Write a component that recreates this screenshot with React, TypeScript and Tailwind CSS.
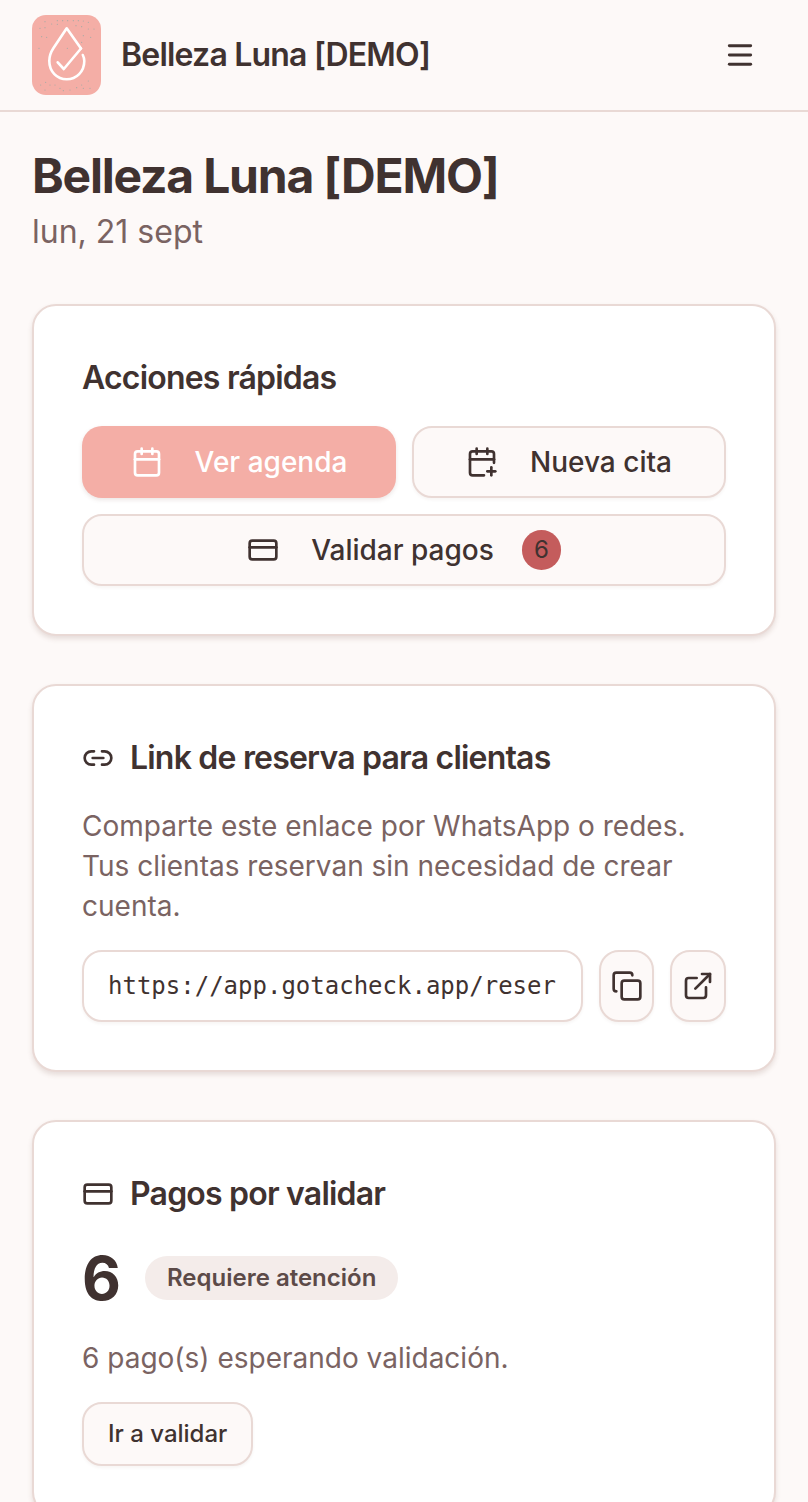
import { Calendar, CalendarPlus, CreditCard, Link2, Copy, ExternalLink, Menu } from "lucide-react";

function Logo() {
  const dots = [
    [75,50],[95,57],[112,47],[128,47],[143,47],[160,47],[175,47],[190,48],[205,52],[60,70],[75,68],[222,72],[205,72],[168,62],[185,65],[65,95],[80,97],[212,97],[190,92],[57,130],[185,112],[142,130],[112,58],
    [62,240],[77,232],[90,240],[105,240],[75,255],[120,250],[130,257],[150,255],[170,248],[185,240],[205,228],[190,250],[210,250],
  ];
  return (
    <div className="w-[69px] h-[80px] rounded-[14px] bg-[#f4aea6] shrink-0 overflow-hidden">
      <svg width="69" height="80" viewBox="0 0 69 80" fill="none">
        {dots.map(([x, y], i) => (
          <circle key={i} cx={x / 3 - 12} cy={y / 3 - 10} r="0.6" fill="#a5aaa5" />
        ))}
        <path
          d="M49 33.5 L34.7 13.3 L21.5 33 C18.5 37.5 17.3 41.5 17.3 46 C17.3 56.5 25 64.2 34.7 64.2 C44.5 64.2 52.3 56.5 52.3 46 C52.3 44 51.8 42 50.8 40"
          stroke="#fff"
          strokeWidth="2.6"
          strokeLinecap="round"
          strokeLinejoin="round"
        />
        <path d="M25.7 47.3 L31.8 54 L49 33.5" stroke="#fff" strokeWidth="2.6" strokeLinecap="round" strokeLinejoin="round" />
      </svg>
    </div>
  );
}

const ghost =
  "flex items-center justify-center border-2 border-[#e9d9d5] bg-[#fdf9f8] text-[#403230] shadow-[0_2px_3px_rgba(120,80,70,0.06)]";
const card =
  "bg-white border-2 border-[#e9d9d5] rounded-[24px] p-[48px] shadow-[0_3px_5px_rgba(120,80,70,0.16)]";

export default function App() {
  return (
    <div className="h-[1502px] overflow-hidden bg-[#fdf9f8] text-[#403230] font-['Inter',sans-serif]">
      <header className="h-[112px] border-b-2 border-[#e9d9d5] pl-[32px] pr-[52px] flex items-center justify-between">
        <div className="flex items-center gap-[20px]">
          <Logo />
          <span className="text-[32px] leading-[40px] font-semibold tracking-[-0.8px]">Belleza Luna [DEMO]</span>
        </div>
        <Menu size={32} strokeWidth={2.2} />
      </header>
      <main className="px-[32px] pt-[36px] flex flex-col">
        <h1 className="text-[48px] leading-[56px] font-bold tracking-[-1.2px]">Belleza Luna [DEMO]</h1>
        <p className="text-[32px] leading-[40px] text-[#7a6362] mt-[8px]">lun, 21 sept</p>

        <section className={`${card} mt-[52px]`}>
          <h2 className="text-[32px] leading-[48px] font-semibold tracking-[-0.8px]">Acciones rápidas</h2>
          <div className="grid grid-cols-2 gap-[16px] mt-[24px]">
            <button className="h-[72px] rounded-[20px] bg-[#f4aea6] text-white flex items-center justify-center gap-[32px] text-[28px] font-medium shadow-[0_2px_4px_rgba(120,80,70,0.14)]">
              <Calendar size={32} strokeWidth={2} />
              Ver agenda
            </button>
            <button className={`${ghost} h-[72px] rounded-[20px] gap-[32px] text-[28px] font-medium`}>
              <CalendarPlus size={32} strokeWidth={2} />
              Nueva cita
            </button>
            <button className={`${ghost} col-span-2 h-[72px] rounded-[20px] text-[28px] font-medium`}>
              <CreditCard size={32} strokeWidth={2} />
              <span className="ml-[32px]">Validar pagos</span>
              <span className="ml-[28px] w-[39px] h-[40px] rounded-full bg-[#c45c5c] flex items-center justify-center text-[24px] font-normal">6</span>
            </button>
          </div>
        </section>

        <section className={`${card} mt-[48px]`}>
          <div className="flex items-center gap-[16px]">
            <Link2 size={32} strokeWidth={2} />
            <h2 className="text-[32px] leading-[48px] font-semibold tracking-[-0.8px]">Link de reserva para clientas</h2>
          </div>
          <p className="mt-[24px] text-[28px] leading-[40px] text-[#7a6362]">
            Comparte este enlace por WhatsApp o redes. Tus clientas reservan sin necesidad de crear cuenta.
          </p>
          <div className="flex gap-[16px] mt-[24px]">
            <div className="flex-1 min-w-0 h-[72px] rounded-[20px] border-2 border-[#e9d9d5] bg-white px-[24px] flex items-center overflow-hidden font-['DejaVu_Sans_Mono',monospace] text-[24px] whitespace-nowrap shadow-[0_2px_3px_rgba(120,80,70,0.06)]">
              https://app.gotacheck.app/reser
            </div>
            <button className={`${ghost} w-[55px] h-[72px] rounded-[20px] shrink-0`}>
              <Copy size={32} strokeWidth={2} />
            </button>
            <button className={`${ghost} w-[56px] h-[72px] rounded-[20px] shrink-0`}>
              <ExternalLink size={32} strokeWidth={2} />
            </button>
          </div>
        </section>

        <section className={`${card} mt-[48px]`}>
          <div className="flex items-center gap-[16px]">
            <CreditCard size={32} strokeWidth={2} />
            <h2 className="text-[32px] leading-[48px] font-semibold tracking-[-0.8px]">Pagos por validar</h2>
          </div>
          <div className="flex items-center gap-[24px] mt-[24px]">
            <span className="text-[60px] leading-[72px] font-bold">6</span>
            <span className="h-[44px] px-[22px] rounded-full bg-[#f4ecea] text-[#5c4a48] flex items-center text-[24px] font-semibold">Requiere atención</span>
          </div>
          <p className="mt-[24px] text-[28px] leading-[40px] text-[#7a6362]">6 pago(s) esperando validación.</p>
          <button className={`${ghost} mt-[24px] h-[64px] px-[24px] rounded-[20px] text-[24px] font-medium`}>Ir a validar</button>
        </section>
      </main>
    </div>
  );
}
